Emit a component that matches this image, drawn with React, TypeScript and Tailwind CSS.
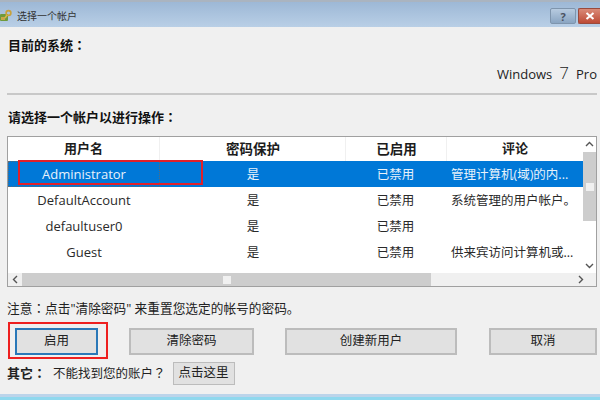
const rows = [
  { name: "Administrator", pw: "是", state: "已禁用", note: "管理计算机(域)的内..." },
  { name: "DefaultAccount", pw: "是", state: "已禁用", note: "系统管理的用户帐户。" },
  { name: "defaultuser0", pw: "是", state: "已禁用", note: "" },
  { name: "Guest", pw: "是", state: "已禁用", note: "供来宾访问计算机或..." },
];

// centered full width punctuation, the SC face sits it too far left
function Punct({ c }: { c: string }) {
  return <span className="font-['Noto_Sans_CJK_TC',sans-serif]">{c}</span>;
}

function Chevron({ d }: { d: string }) {
  return (
    <svg width="9" height="9" viewBox="0 0 9 9" fill="none" stroke="#555" strokeWidth="1.4">
      <path d={d} />
    </svg>
  );
}

function Titlebar() {
  return (
    <div className="flex h-[27px] shrink-0 border-t-2 border-[#aab4c0] bg-gradient-to-b from-[#9db8d6] to-[#b9cfe6]">
      <svg width="13" height="14" viewBox="0 0 13 14" className="mt-[7px]">
        <rect x="0" y="5" width="8" height="7" rx="1" fill="#6f9a3c" />
        <rect x="1" y="8" width="4" height="3" fill="#c9a64a" />
        <circle cx="8.500" cy="4" r="2.400" fill="none" stroke="#c9a13a" strokeWidth="1.600" />
        <path d="M7 6l-2 3" stroke="#d9b64a" strokeWidth="1.500" />
      </svg>
      <span className="ml-[4px] mt-[7px] text-[10px] leading-[14px] text-[#333]">选择一个帐户</span>
      <div className="ml-auto mt-[6px] flex h-[16px]">
        <div className="flex w-[26px] items-center justify-center rounded-[2px] border border-[#7f95ad] bg-gradient-to-b from-[#b7cbe0] to-[#8aa5c2] text-[11px] font-bold leading-none text-[#4a5260]">
          ?
        </div>
        <div className="ml-[2px] flex w-[22px] items-center justify-center rounded-l-[2px] border border-r-0 border-[#9a4a3c] bg-gradient-to-b from-[#d98a78] to-[#bd4a35]">
          <svg width="10" height="8" viewBox="0 0 10 8" stroke="#fff" strokeWidth="2">
            <path d="M1.500 1l7 6M8.500 1l-7 6" />
          </svg>
        </div>
      </div>
    </div>
  );
}

function Table() {
  return (
    <div className="ml-[7px] mr-[3px] flex h-[151px] flex-col border border-[#a0a0a0] bg-white">
      <div className="flex min-h-0 flex-1">
        <div className="min-w-0 flex-1">
          <div className="flex h-[24px] text-[13px] font-bold text-[#1c1c1c]">
            <div className="flex w-[152px] shrink-0 items-center justify-center border-r border-[#f0f0f0]">用户名</div>
            <div className="flex w-[186px] shrink-0 items-center justify-center border-r border-[#f0f0f0] pl-[1px] text-[13.5px]">密码保护</div>
            <div className="flex w-[101px] shrink-0 items-center justify-center border-r border-[#f0f0f0] pl-[1px] text-[13.5px]">已启用</div>
            <div className="flex flex-1 items-center justify-center">评论</div>
          </div>
          {rows.map((r, i) => (
            <div
              key={r.name}
              className={
                i === 0
                  ? "flex h-[26px] items-center bg-[#0078d7] pt-[2px] text-[12.5px] text-[#e8f2fb]"
                  : "flex h-[26px] items-center pt-[2px] text-[12.5px] text-[#2a2a2a]"
              }
            >
              <div
                className={
                  i === 0
                    ? "-mt-[2px] flex h-[26px] w-[152px] shrink-0 items-center justify-center border border-dotted border-[#5a6a78] pt-[2px] text-[13px]"
                    : "flex w-[152px] shrink-0 items-center justify-center text-[13px]"
                }
              >
                {r.name}
              </div>
              <div className="w-[186px] shrink-0 text-center">{r.pw}</div>
              <div className="w-[101px] shrink-0 pr-[2px] text-center">{r.state}</div>
              <div className="min-w-0 flex-1 whitespace-nowrap pl-[4px]">{r.note}</div>
            </div>
          ))}
        </div>
        <div className="flex w-[13px] shrink-0 flex-col items-center">
          <div className="flex h-[15px] items-center justify-center">
            <Chevron d="M1 6l3.500-3.500L8 6" />
          </div>
          <div className="flex h-[69px] w-full items-center justify-center bg-[#cdcdcd]">
            <div className="h-[8px] w-[8px] bg-[#f0f0f0]" />
          </div>
          <div className="mt-auto flex h-[15px] items-center justify-center">
            <Chevron d="M1 3l3.500 3.500L8 3" />
          </div>
        </div>
      </div>
      <div className="flex h-[13px] shrink-0 items-center bg-[#f0f0f0]">
        <div className="flex w-[14px] justify-center">
          <Chevron d="M6 1L2.500 4.500 6 8" />
        </div>
        <div className="flex h-full w-[409px] items-center justify-center bg-[#cdcdcd]">
          <div className="h-[8px] w-[8px] bg-[#f0f0f0]" />
        </div>
        <div className="ml-auto flex w-[32px] justify-center">
          <Chevron d="M3 1l3.500 3.500L3 8" />
        </div>
      </div>
    </div>
  );
}

function Button({ w, label, focus }: { w: string; label: string; focus?: boolean }) {
  return (
    <button
      className={`flex h-[27px] items-center justify-center border-2 bg-[#e1e1e1] text-[12.5px] text-[#222] ${w} ${
        focus ? "border-[#2a78b8]" : "border-[#bcbcbc]"
      }`}
    >
      {label}
    </button>
  );
}

export default function App() {
  return (
    <div className="relative flex h-[400px] w-[600px] flex-col overflow-hidden bg-[#f0f0f0] font-['Open_Sans','Noto_Sans_CJK_SC',sans-serif]">
      <Titlebar />
      <div className="ml-[8px] mt-[10px] text-[13px] font-bold leading-[16px] text-[#111]">
        目前的系统
        <Punct c="：" />
      </div>
      <div className="mt-[10px] flex h-[20px] items-baseline justify-end pr-[3px] text-[13px] leading-[20px] text-[#222]">
        Windows
        <span className="mx-[7px] text-[17px] font-light leading-[20px]">7</span>
        Pro
      </div>
      <div className="ml-[7px] mr-[3px] mt-[10px] h-[2px] bg-[#c8c8c8]" />
      <div className="ml-[8px] mt-[14px] text-[13px] font-bold leading-[16px] text-[#111]">
        请选择一个帐户以进行操作
        <Punct c="：" />
      </div>
      <div className="mt-[11px]">
        <Table />
      </div>
      <div className="ml-[7px] mt-[12px] text-[12.7px] leading-[18px] text-[#222]">
        注意
        <Punct c="：" />
        点击"清除密码" 来重置您选定的帐号的密码。
      </div>
      <div className="mt-[11px] flex pl-[15px]">
        <Button w="w-[83px]" label="启用" focus />
        <Button w="ml-[31px] w-[125px]" label="清除密码" />
        <Button w="ml-[31px] w-[172px]" label="创建新用户" />
        <Button w="ml-[32px] w-[108px]" label="取消" />
      </div>
      <div className="ml-[7px] mt-[7px] flex items-center text-[12.5px] text-[#222]">
        <span className="text-[13px] font-bold">
          其它
          <Punct c="：" />
        </span>
        <span className="ml-[7px]">
          不能找到您的账户
          <Punct c="？" />
        </span>
        <button className="ml-[7px] flex h-[23px] w-[62px] items-center justify-center border border-[#bcbcbc] bg-[#e1e1e1] text-[12.5px]">
          点击这里
        </button>
      </div>
      <div className="mt-auto h-[6px] border-t-[3px] border-[#bcd4ea] bg-[#8fd8ee]" />
      {/* red annotation boxes over the screenshot */}
      <div className="absolute left-[18px] top-[160px] h-[25px] w-[185px] border-2 border-[#e0202a]" />
      <div className="absolute left-[8px] top-[322px] h-[37px] w-[100px] border-2 border-[#ee2020]" />
    </div>
  );
}
